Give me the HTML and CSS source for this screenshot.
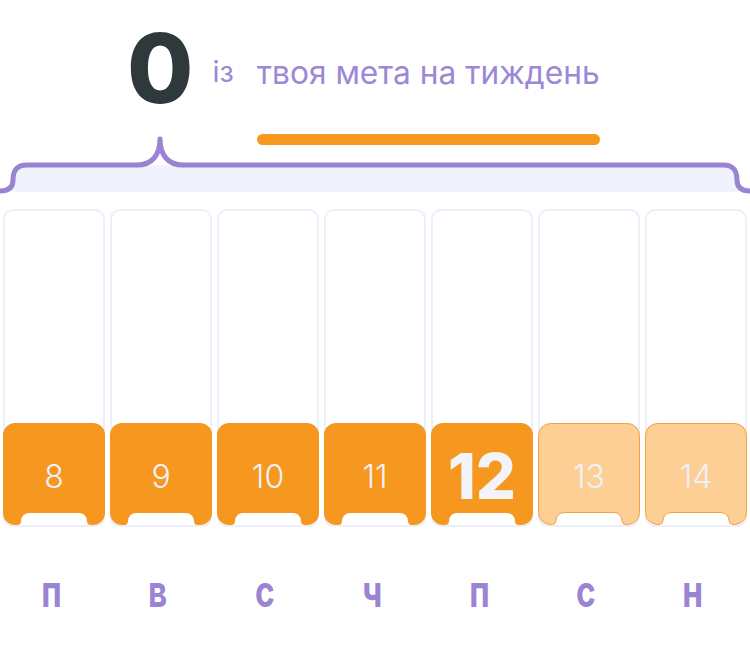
FILE: index.html
```html
<!DOCTYPE html>
<html lang="uk">
<head>
<meta charset="utf-8">
<title>Тижнева мета</title>
<link rel="stylesheet" href="styles.css">
</head>
<body>
<div class="page">
  <header class="header">
    <div class="count">0</div>
    <div class="of">із</div>
    <div class="goal">
      <div class="goal-text">твоя мета на тиждень</div>
      <div class="goal-bar"></div>
    </div>
  </header>

  <svg class="brace" width="750" height="70" viewBox="0 0 750 70">
    <path class="brace-fill" d="M13,50 C13,40 17,35 27,35 H723 C733,35 737,40 737,50 V62 H13 Z"/>
    <path class="brace-line" d="M0,61 C9,61 13,57 13,50 C13,40 17,35 27,35 H137 C152,35 160,25 160,9 C160,25 168,35 183,35 H723 C733,35 737,40 737,50 C737,57 741,61 750,61"/>
  </svg>

  <div class="week">
    <div class="day"><div class="tile"><svg class="tile-shape" viewBox="0 0 102 102"><path d="M12,0 H90 A12,12 0 0 1 102,12 V90 A12,12 0 0 1 90,102 H88 A4,4 0 0 1 84,98 A8,8 0 0 0 76,90 H26 A8,8 0 0 0 18,98 A4,4 0 0 1 14,102 H12 A12,12 0 0 1 0,90 V12 A12,12 0 0 1 12,0 Z"/></svg><span class="num">8</span></div></div>
    <div class="day"><div class="tile"><svg class="tile-shape" viewBox="0 0 102 102"><path d="M12,0 H90 A12,12 0 0 1 102,12 V90 A12,12 0 0 1 90,102 H88 A4,4 0 0 1 84,98 A8,8 0 0 0 76,90 H26 A8,8 0 0 0 18,98 A4,4 0 0 1 14,102 H12 A12,12 0 0 1 0,90 V12 A12,12 0 0 1 12,0 Z"/></svg><span class="num">9</span></div></div>
    <div class="day"><div class="tile"><svg class="tile-shape" viewBox="0 0 102 102"><path d="M12,0 H90 A12,12 0 0 1 102,12 V90 A12,12 0 0 1 90,102 H88 A4,4 0 0 1 84,98 A8,8 0 0 0 76,90 H26 A8,8 0 0 0 18,98 A4,4 0 0 1 14,102 H12 A12,12 0 0 1 0,90 V12 A12,12 0 0 1 12,0 Z"/></svg><span class="num">10</span></div></div>
    <div class="day"><div class="tile"><svg class="tile-shape" viewBox="0 0 102 102"><path d="M12,0 H90 A12,12 0 0 1 102,12 V90 A12,12 0 0 1 90,102 H88 A4,4 0 0 1 84,98 A8,8 0 0 0 76,90 H26 A8,8 0 0 0 18,98 A4,4 0 0 1 14,102 H12 A12,12 0 0 1 0,90 V12 A12,12 0 0 1 12,0 Z"/></svg><span class="num">11</span></div></div>
    <div class="day"><div class="tile"><svg class="tile-shape" viewBox="0 0 102 102"><path d="M12,0 H90 A12,12 0 0 1 102,12 V90 A12,12 0 0 1 90,102 H88 A4,4 0 0 1 84,98 A8,8 0 0 0 76,90 H26 A8,8 0 0 0 18,98 A4,4 0 0 1 14,102 H12 A12,12 0 0 1 0,90 V12 A12,12 0 0 1 12,0 Z"/></svg><span class="num num-today">12</span></div></div>
    <div class="day"><div class="tile tile-future"><svg class="tile-shape" viewBox="0 0 102 102"><path d="M12.5,0.5 H89.5 A12,12 0 0 1 101.5,12.5 V89.5 A12,12 0 0 1 89.5,101.5 H88 A4,4 0 0 1 84,97.5 A8,8 0 0 0 76,89.5 H26 A8,8 0 0 0 18,97.5 A4,4 0 0 1 14,101.5 H12.5 A12,12 0 0 1 0.5,89.5 V12.5 A12,12 0 0 1 12.5,0.5 Z"/></svg><span class="num">13</span></div></div>
    <div class="day"><div class="tile tile-future"><svg class="tile-shape" viewBox="0 0 102 102"><path d="M12.5,0.5 H89.5 A12,12 0 0 1 101.5,12.5 V89.5 A12,12 0 0 1 89.5,101.5 H88 A4,4 0 0 1 84,97.5 A8,8 0 0 0 76,89.5 H26 A8,8 0 0 0 18,97.5 A4,4 0 0 1 14,101.5 H12.5 A12,12 0 0 1 0.5,89.5 V12.5 A12,12 0 0 1 12.5,0.5 Z"/></svg><span class="num">14</span></div></div>
  </div>

  <div class="labels">
    <span class="label"><span class="letter">п</span></span>
    <span class="label"><span class="letter">в</span></span>
    <span class="label"><span class="letter">с</span></span>
    <span class="label"><span class="letter">ч</span></span>
    <span class="label"><span class="letter">п</span></span>
    <span class="label"><span class="letter">с</span></span>
    <span class="label"><span class="letter">н</span></span>
  </div>
</div>
</body>
</html>
```

FILE: styles.css
```css
* { box-sizing: border-box; }

html, body {
  margin: 0;
  padding: 0;
  background: #ffffff;
}

body {
  font-family: Inter, "Noto Sans", "DejaVu Sans", sans-serif;
  width: 750px;
  height: 649px;
  overflow: hidden;
}

.page {
  display: flex;
  flex-direction: column;
}

/* ---------- header ---------- */
.header {
  display: flex;
  align-items: flex-start;
  height: 130px;
  padding-left: 127px;
}

.count {
  font-size: 96px;
  font-weight: 800;
  line-height: 1;
  color: #2f383b;
  margin-top: 20px;
}

.of {
  font-size: 29px;
  font-weight: 400;
  line-height: 1;
  color: #9b88d6;
  margin-top: 57px;
  margin-left: 19px;
}

.goal {
  display: flex;
  flex-direction: column;
  margin-top: 57px;
  margin-left: 23px;
}

.goal-text {
  font-size: 31.7px;
  font-weight: 400;
  line-height: 1;
  color: #9b88d6;
  white-space: nowrap;
}

.goal-bar {
  height: 11px;
  border-radius: 6px;
  background: #f7991f;
  margin-top: 45px;
}

/* ---------- brace ---------- */
.brace {
  display: block;
  width: 750px;
  height: 70px;
}

.brace-fill {
  fill: #f0f2fe;
}

.brace-line {
  fill: none;
  stroke: #9a84d2;
  stroke-width: 5;
  stroke-linecap: round;
  stroke-linejoin: round;
}

/* ---------- week columns ---------- */
.week {
  display: grid;
  grid-template-columns: repeat(7, 102px);
  column-gap: 5px;
  padding: 0 3px;
  margin-top: 9px;
}

.day {
  height: 318px;
  border: 2px solid #eceffa;
  border-radius: 10px;
  display: flex;
  flex-direction: column;
  justify-content: flex-end;
}

.tile {
  display: grid;
  height: 102px;
  margin: 0 -2px;
}

.tile-shape,
.num {
  grid-area: 1 / 1;
}

.tile-shape {
  display: block;
  width: 102px;
  height: 102px;
}

.tile-shape path {
  fill: #f6981f;
}

.tile-future .tile-shape path {
  fill: #fecf95;
  stroke: #f3a142;
  stroke-width: 1;
}

.num {
  align-self: center;
  justify-self: center;
  font-size: 32px;
  font-weight: 300;
  line-height: 1;
  color: #eff1fb;
  margin-top: 6px;
}

.num-today {
  font-size: 63px;
  font-weight: 800;
  color: #f2f3fb;
  margin-top: 4px;
}

/* ---------- day labels ---------- */
.labels {
  display: grid;
  grid-template-columns: repeat(7, 102px);
  column-gap: 5px;
  padding: 0 3px;
  margin-top: 42px;
}

.label {
  display: flex;
  justify-content: center;
}

.letter {
  display: inline-block;
  font-size: 44px;
  font-weight: 700;
  line-height: 1;
  color: #9a84d3;
  transform: scaleX(0.76);
  margin-left: -6px;
}
```
